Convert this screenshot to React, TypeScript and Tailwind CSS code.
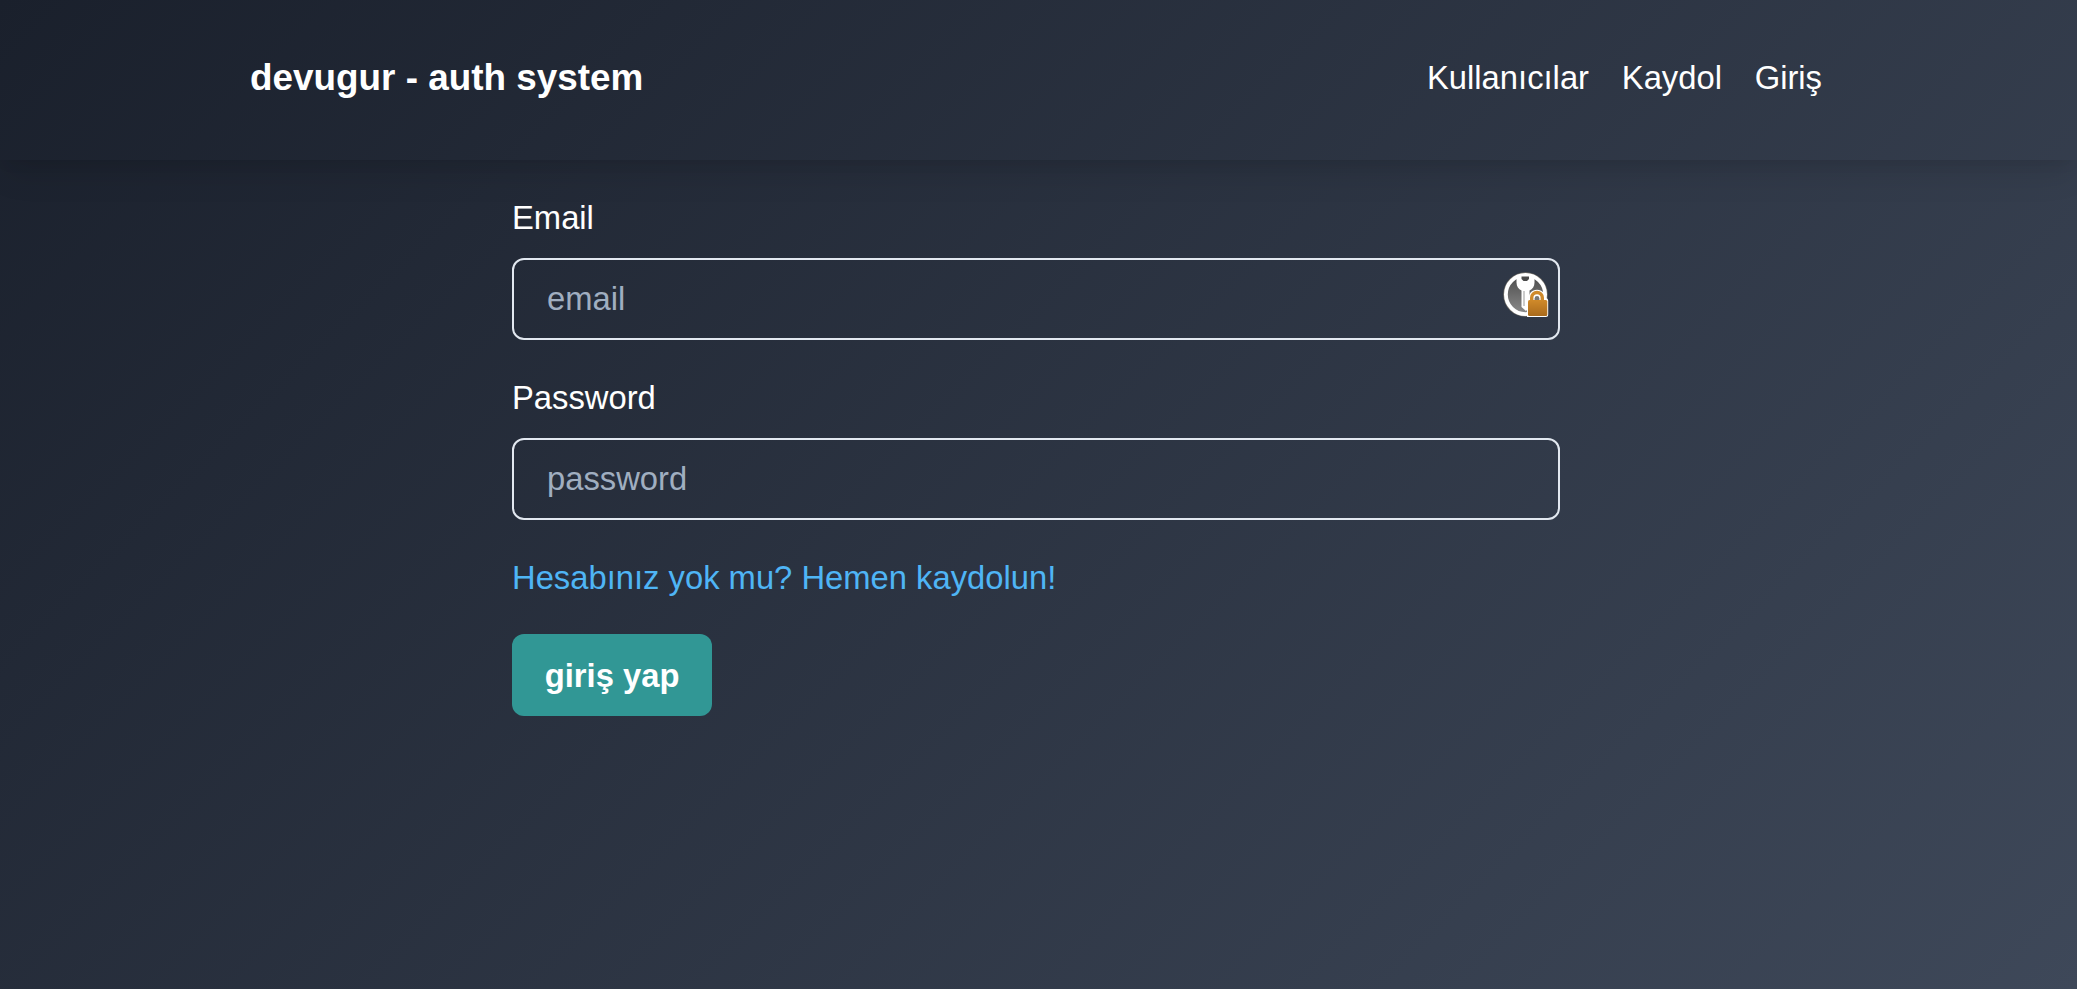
import React from "react";

function KeyLockIcon() {
  return (
    <svg viewBox="0 0 46 46" className="h-[46px] w-[46px]">
      <defs>
        <linearGradient id="disc" x1="0" y1="0" x2="0" y2="1">
          <stop offset="0" stopColor="#4a4a4a" />
          <stop offset="1" stopColor="#8c8c8c" />
        </linearGradient>
        <linearGradient id="lock" x1="0" y1="0" x2="0" y2="1">
          <stop offset="0" stopColor="#d08a2a" />
          <stop offset="1" stopColor="#a96a1c" />
        </linearGradient>
      </defs>
      <circle cx="22.5" cy="22.5" r="22.2" fill="#77736a" />
      <circle cx="22.5" cy="22.5" r="19.6" fill="url(#disc)" stroke="#fff" strokeWidth="3.8" />
      <path d="M13.500 3h18v7.500c0 4-2 6.500-5 8v16.500l-3.500 4-4.500-4v-16.500c-3-1.500-5-4-5-8z" fill="#fff" />
      <path d="M18.500 4.500h7.500v2.500l-2 2h-3.500l-2-2z" fill="#4a4a4a" />
      <path d="M21 19v15" stroke="#999" strokeWidth="1" />
      <path d="M24 28.500a3 3 0 0 1 1.800-2.500c0-4.500 2.800-8.200 8.200-8.200s8.200 3.700 8.200 8.200a3 3 0 0 1 3 3V42.500a2.500 2.500 0 0 1-2.500 2.500H24z" fill="#fff" />
      <path d="M28.700 30v-4.200a5.300 5.300 0 0 1 10.600 0V30z" fill="#fff" stroke="#cf8a2c" strokeWidth="3.400" />
      <path d="M31.600 28v-1.500a2.400 2.400 0 0 1 4.800 0V28z" fill="#777" />
      <rect x="25" y="28" width="19.300" height="16" rx="1.500" fill="url(#lock)" />
    </svg>
  );
}

function Field({ label, type, adornment }: { label: string; type: string; adornment?: React.ReactNode }) {
  return (
    <div className="mb-[33px]">
      <label className="mb-4 block" htmlFor={label}>{label}</label>
      <div className="relative">
        <input
          id={label}
          type={type}
          placeholder={label.toLowerCase()}
          className="block h-[82px] w-full rounded-xl border-2 border-[#e2e8f0] bg-transparent px-[33px] outline-none placeholder:text-[#a0aec0]"
        />
        {adornment && <span className="absolute top-[13.500px] right-[11.500px]">{adornment}</span>}
      </div>
    </div>
  );
}

export default function App() {
  return (
    <div className="h-[989px] overflow-hidden bg-[linear-gradient(135deg,#1a202c,#3e4859)] font-['Liberation_Sans',sans-serif] text-[32.768px] leading-[49px] text-white">
      <header className="h-[160px] shadow-[0_20px_30px_-6px_rgba(0,0,0,0.1),0_8px_12px_-4px_rgba(0,0,0,0.05)]">
        <div className="mr-[5px] flex h-full justify-center pb-1.5">
          <div className="flex w-[1572px] items-center justify-between">
            <h1 className="text-[36.864px] font-bold">devugur - auth system</h1>
            <nav className="flex gap-[32.768px]">
              <a href="#users">Kullanıcılar</a>
              <a href="#register">Kaydol</a>
              <a href="#login">Giriş</a>
            </nav>
          </div>
        </div>
      </header>
      <main className="pr-[5px] pt-[33px]">
        <form className="mx-auto w-[1048px]">
          <Field label="Email" type="text" adornment={<KeyLockIcon />} />
          <Field label="Password" type="password" />
          <a href="#register" className="block text-[#4fb5f5]">Hesabınız yok mu? Hemen kaydolun!</a>
          <button type="button" className="mt-8 h-[82px] rounded-xl bg-[#319795] px-[32.768px] font-bold">giriş yap</button>
        </form>
      </main>
    </div>
  );
}
